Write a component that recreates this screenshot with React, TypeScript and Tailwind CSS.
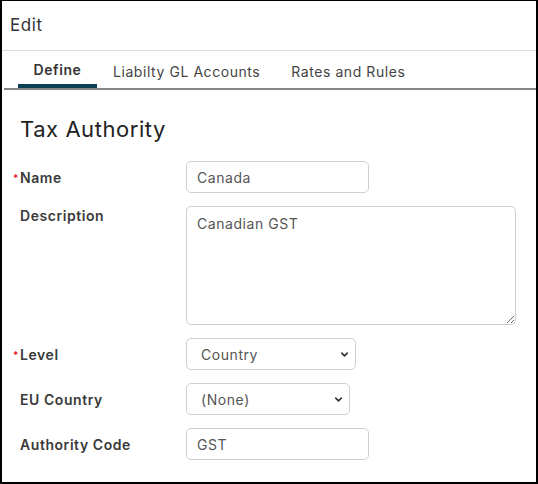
import { ChevronDown } from "lucide-react";

const font = { fontFamily: "Inter, 'Noto Sans', sans-serif", letterSpacing: "0.035em" };

function Label({ text, required }: { text: string; required?: boolean }) {
  return (
    <div className="relative w-[184px] shrink-0 pl-[18px] text-[14px] font-semibold text-[#3a3a3a]">
      {required && (
        <span className="absolute left-[11px] top-[6px] text-[10px] leading-none text-[#e02020]">*</span>
      )}
      {text}
    </div>
  );
}

function Select({ value, width }: { value: string; width: string }) {
  return (
    <div className={`relative ${width}`}>
      <select
        defaultValue={value}
        className="h-[32px] w-full appearance-none rounded-[5px] border border-[#cfcfcf] bg-white pl-[14px] text-[14px] tracking-[0.04em] text-[#555] outline-none"
      >
        <option>{value}</option>
      </select>
      <ChevronDown
        className="pointer-events-none absolute right-[6px] top-[11px] h-[11px] w-[11px] text-[#333]"
        strokeWidth={3.5}
      />
    </div>
  );
}

export default function App() {
  return (
    <div
      className="h-[484px] w-[538px] border-x-2 border-b-2 border-t border-black bg-white"
      style={font}
    >
      {/* Dialog title */}
      <div className="flex h-[50px] items-center border-b border-[#dedede] pl-[8px] text-[17px] text-[#333]">
        Edit
      </div>

      {/* Tabs */}
      <div className="ml-[2px] flex h-[39px] border-b-2 border-[#858585] text-[14px] text-[#444]">
        <div className="flex w-[79px] ml-[14px] items-center justify-center border-b-4 border-[#0d3f52] pt-[3px] font-semibold text-[#333]">
          Define
        </div>
        <div className="flex items-center pl-[16px] pr-[31px] pt-[3px]">Liabilty GL Accounts</div>
        <div className="flex items-center pt-[3px]">Rates and Rules</div>
      </div>

      <div className="pt-[24px]">
        <h1 className="pl-[18px] text-[22px] leading-[30px] text-[#222]">Tax Authority</h1>

        <div className="mt-[17px] flex flex-col gap-[13px]">
          <div className="flex items-center">
            <Label text="Name" required />
            <input
              defaultValue="Canada"
              className="h-[32px] w-[183px] rounded-[5px] border border-[#cfcfcf] px-[10px] text-[14px] tracking-[0.04em] text-[#555] outline-none"
            />
          </div>

          <div className="flex items-start">
            <div className="-mt-[1px]">
              <Label text="Description" />
            </div>
            <textarea
              defaultValue="Canadian GST"
              className="h-[119px] w-[330px] resize-y rounded-[5px] border border-[#cfcfcf] px-[10px] pt-[6px] text-[14px] tracking-[0.04em] text-[#555] outline-none"
            />
          </div>

          <div className="flex items-center">
            <Label text="Level" required />
            <Select value="Country" width="w-[170px]" />
          </div>

          <div className="flex items-center">
            <Label text="EU Country" />
            <Select value="(None)" width="w-[164px]" />
          </div>

          <div className="flex items-center">
            <Label text="Authority Code" />
            <input
              defaultValue="GST"
              className="h-[32px] w-[183px] rounded-[5px] border border-[#cfcfcf] px-[10px] text-[14px] tracking-[0.04em] text-[#555] outline-none"
            />
          </div>
        </div>
      </div>
    </div>
  );
}
